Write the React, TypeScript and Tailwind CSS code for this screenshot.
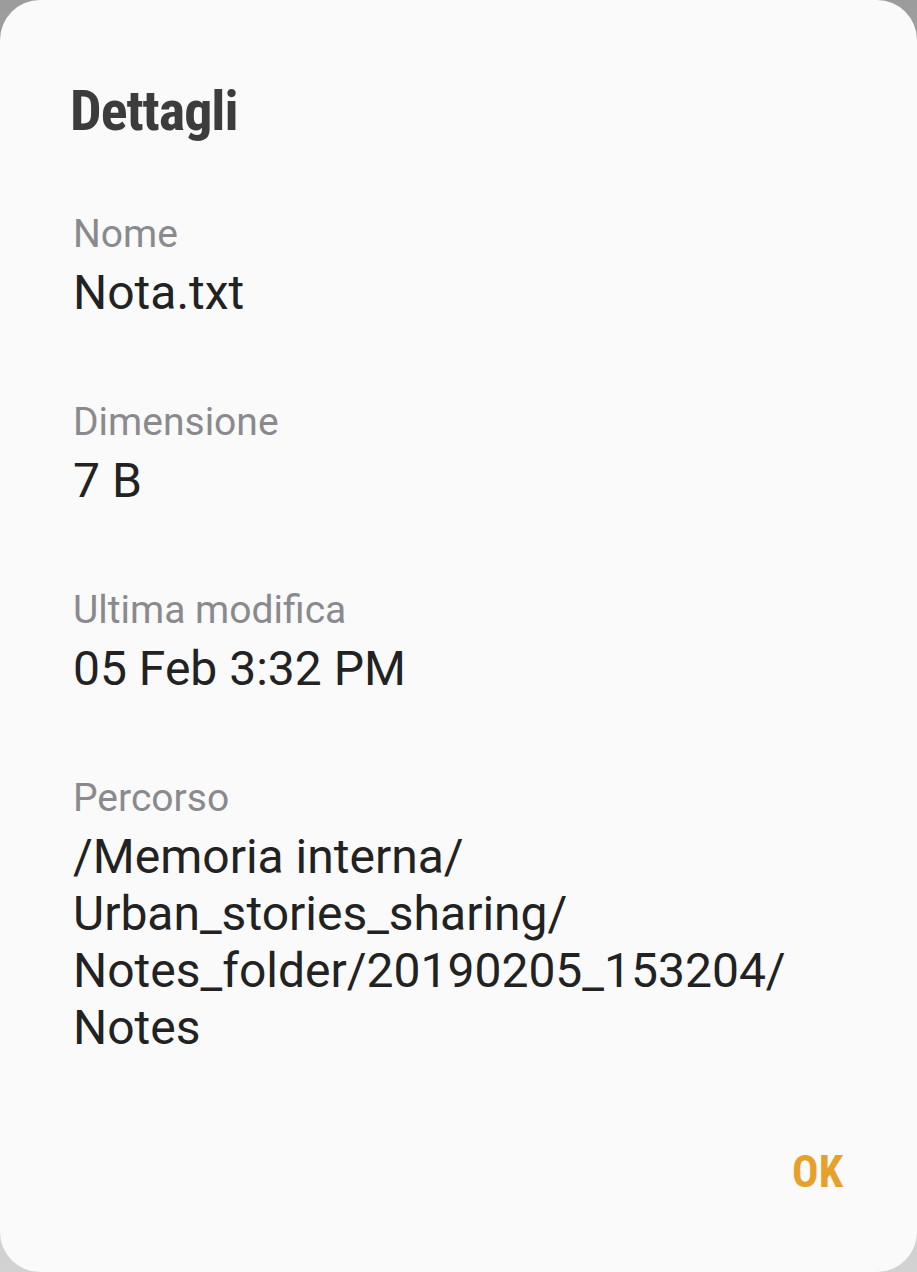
import React from 'react';

const rows = [
  { label: 'Nome', value: ['Nota.txt'] },
  { label: 'Dimensione', value: ['7 B'] },
  { label: 'Ultima modifica', value: ['05 Feb 3:32 PM'] },
  {
    label: 'Percorso',
    value: ['/Memoria interna/', 'Urban_stories_sharing/', 'Notes_folder/20190205_153204/', 'Notes'],
  },
];

const App: React.FC = () => {
  return (
    <div className="w-[917px] h-[1272px] bg-linear-to-b from-[#9c9c9c] to-[#d2d2d2] font-['Roboto',sans-serif]">
      <div className="w-full h-full bg-[#fafafa] rounded-[40px] flex flex-col pl-[73px] pr-[74px] pt-[83px]">
        {/* title */}
        <h1 className="-ml-[3px] text-[56px] leading-[56px] font-bold tracking-[-1px] text-[#3c3c3c] [font-stretch:75%]">
          Dettagli
        </h1>

        <div className="mt-[73px] flex flex-col gap-[79px]">
          {rows.map((row) => (
            <div key={row.label} className="flex flex-col">
              <div className="text-[39px] leading-[44px] text-[#8a8a8e]">{row.label}</div>
              <div className="mt-[8px] text-[48px] leading-[57px] text-[#222222]">
                {row.value.map((line) => (
                  <div key={line}>{line}</div>
                ))}
              </div>
            </div>
          ))}
        </div>

        <div className="mt-auto mb-[78px] flex justify-end">
          <button className="text-[44px] leading-[44px] font-bold text-[#e6a12c] [font-stretch:75%]">OK</button>
        </div>
      </div>
    </div>
  );
};

export default App;
